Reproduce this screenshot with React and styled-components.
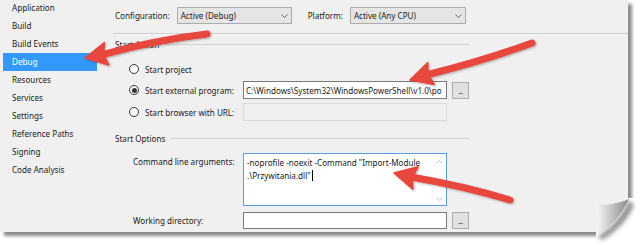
import React from 'react';
import styled, { createGlobalStyle } from 'styled-components';

const Global = createGlobalStyle`
  html, body {
    margin: 0;
    padding: 0;
    background: #ffffff;
  }
  body {
    font-family: "Noto Sans", "DejaVu Sans", sans-serif;
    font-size: 8.1px;
    color: #1b1b1b;
  }
`;

const pages = [
  'Application',
  'Build',
  'Build Events',
  'Debug',
  'Resources',
  'Services',
  'Settings',
  'Reference Paths',
  'Signing',
  'Code Analysis',
];

const arrows = [
  { tail: [207, 34], tip: [85, 58], bend: 4 },
  { tail: [532, 43], tip: [410, 80], bend: -3 },
  { tail: [510, 200], tip: [394, 173], bend: 3 },
];

function Arrow({ tail, tip, bend }) {
  const dx = tip[0] - tail[0];
  const dy = tip[1] - tail[1];
  const len = Math.hypot(dx, dy);
  const ux = dx / len;
  const uy = dy / len;
  const nx = -uy;
  const ny = ux;
  const headLen = 22;
  const headW = 11.5;
  const bx = tip[0] - ux * headLen;
  const by = tip[1] - uy * headLen;
  const mx = (tail[0] + bx) / 2 + nx * bend;
  const my = (tail[1] + by) / 2 + ny * bend;
  const ex = bx + ux * 3;
  const ey = by + uy * 3;
  return (
    <g>
      <path
        d={`M${tail[0]} ${tail[1]} Q${mx} ${my} ${ex} ${ey}`}
        stroke="#e8463d"
        strokeWidth="7"
        strokeLinecap="round"
        fill="none"
      />
      <polygon
        points={`${tip[0]},${tip[1]} ${bx + nx * headW},${by + ny * headW} ${bx + ux * 3},${by + uy * 3} ${bx - nx * headW},${by - ny * headW}`}
        fill="#e8463d"
        strokeLinejoin="round"
        stroke="#e8463d"
        strokeWidth="1.5"
      />
    </g>
  );
}

function Chevron({ up }) {
  return (
    <svg width="7" height="4" viewBox="0 0 7 4">
      <polyline
        points={up ? '0.5,3.5 3.5,0.5 6.5,3.5' : '0.5,0.5 3.5,3.5 6.5,0.5'}
        fill="none"
        stroke="currentColor"
        strokeWidth="1"
      />
    </svg>
  );
}

export default function App() {
  return (
    <Stage>
      <Global />
      <Sheet>
        <Sidebar>
          {pages.map((p) => (
            <NavItem key={p} $active={p === 'Debug'}>
              {p}
            </NavItem>
          ))}
        </Sidebar>
        <Main>
          <ConfigBar>
            <BarLabel>Configuration:</BarLabel>
            <Dropdown $w={115}>
              Active (Debug)
              <Chevron />
            </Dropdown>
            <BarLabel $gap={16}>Platform:</BarLabel>
            <Dropdown $w={116}>
              Active (Any CPU)
              <Chevron />
            </Dropdown>
          </ConfigBar>
          <Divider />

          <GroupHeader>
            <span>Start Action</span>
            <Rule />
          </GroupHeader>
          <RadioRows>
            <RadioRow>
              <Radio>
                <Dot />
                Start project
              </Radio>
            </RadioRow>
            <RadioRow>
              <Radio>
                <Dot $checked />
                Start external program:
              </Radio>
              <Field>C:\Windows\System32\WindowsPowerShell\v1.0\po</Field>
              <Browse>...</Browse>
            </RadioRow>
            <RadioRow $shift={1}>
              <Radio>
                <Dot />
                Start browser with URL:
              </Radio>
              <Field $disabled />
            </RadioRow>
          </RadioRows>

          <GroupHeader $top={8}>
            <span>Start Options</span>
            <Rule />
          </GroupHeader>
          <OptionRow $top={6}>
            <OptionLabel>Command line arguments:</OptionLabel>
            <TextArea>
              <span>
                -noprofile -noexit -Command "Import-Module
                <br />
                .\Przywitania.dll"
                <Caret />
              </span>
              <ScrollCol>
                <Chevron up />
                <Chevron />
              </ScrollCol>
            </TextArea>
          </OptionRow>
          <OptionRow $top={6}>
            <OptionLabel>Working directory:</OptionLabel>
            <Field $h={17} />
            <Browse $h={17}>...</Browse>
          </OptionRow>
        </Main>
      </Sheet>

      <Curl width="44" height="47" viewBox="596 198 44 47">
        <defs>
          <linearGradient id="curlFill" x1="0" y1="0" x2="1" y2="0">
            <stop offset="0" stopColor="#f4f4f4" />
            <stop offset="0.5" stopColor="#c0c0c0" />
            <stop offset="1" stopColor="#888888" />
          </linearGradient>
          <filter id="curlShadow" x="-50%" y="-50%" width="200%" height="200%">
            <feGaussianBlur stdDeviation="2" />
          </filter>
        </defs>
        <rect x="596" y="198" width="44" height="47" fill="#ffffff" />
        <path d="M629 200 C622 215 612 228 598 236 L602 240 C616 232 628 220 634 205 Z" fill="#4a4a4a" opacity="0.6" filter="url(#curlShadow)" />
        <path d="M596 198 L629 198 L629 199 C620 203 606 205 597 205 L596 205 Z" fill="#f0f0f0" />
        <path d="M596 205 L597 205 C600 214 600 224 598 233 L596 233 Z" fill="#f0f0f0" />
        <path d="M629 199 C620 203 606 205 597 205 C600 214 600 224 598 235 C611 227 622 214 629 199 Z" fill="url(#curlFill)" />
      </Curl>

      <Overlay width="640" height="245" viewBox="0 0 640 245">
        <defs>
          <filter id="arrowShadow" x="-10%" y="-30%" width="120%" height="160%">
            <feDropShadow dx="1" dy="1" stdDeviation="0.8" floodColor="#000" floodOpacity="0.3" />
          </filter>
        </defs>
        <g filter="url(#arrowShadow)">
          {arrows.map((a, i) => (
            <Arrow key={i} {...a} />
          ))}
        </g>
      </Overlay>
    </Stage>
  );
}

const Stage = styled.div`
  position: relative;
  width: 640px;
  height: 245px;
  overflow: hidden;
  background: #ffffff;
`;

const Sheet = styled.div`
  width: 628px;
  height: 232px;
  background: #f0f0f0;
  box-shadow: 4px 4px 3px rgba(0, 0, 0, 0.45);
  display: grid;
  grid-template-columns: 113px 515px;
  overflow: hidden;
`;

const Sidebar = styled.div`
  display: flex;
  flex-direction: column;
  margin-top: -1px;
`;

const NavItem = styled.div`
  height: 18px;
  line-height: 18px;
  width: 94px;
  margin-left: 3px;
  padding-left: 9px;
  box-sizing: border-box;
  white-space: nowrap;
  color: ${(p) => (p.$active ? '#ffffff' : '#1b1b1b')};
  background: ${(p) => (p.$active ? '#3399ff' : 'transparent')};
`;

const Main = styled.div`
  display: flex;
  flex-direction: column;
  min-width: 0;
`;

const ConfigBar = styled.div`
  display: flex;
  align-items: center;
  height: 17px;
  padding: 7px 0 9px 2px;
`;

const BarLabel = styled.span`
  margin-left: ${(p) => p.$gap || 0}px;
  margin-right: 7px;
  white-space: nowrap;
`;

const Dropdown = styled.div`
  width: ${(p) => p.$w}px;
  height: 17px;
  box-sizing: border-box;
  border: 1px solid #acacac;
  background: #e5e5e5;
  display: flex;
  align-items: center;
  justify-content: space-between;
  padding: 0 3px 0 3px;
  color: #1b1b1b;
  white-space: nowrap;

  svg {
    color: #6a6a6a;
  }
`;

const Divider = styled.div`
  height: 2px;
  background: #cdcdcd;
  border-bottom: 1px solid #f7f7f7;
  box-sizing: border-box;
`;

const GroupHeader = styled.div`
  display: flex;
  align-items: center;
  gap: 6px;
  height: 18px;
  width: 356px;
  padding-left: 2px;
  margin-top: ${(p) => p.$top || 0}px;
  box-sizing: border-box;
  white-space: nowrap;
`;

const Rule = styled.div`
  flex: 1;
  height: 1px;
  background: #d0d0d0;
`;

const RadioRows = styled.div`
  display: flex;
  flex-direction: column;
  gap: 3px;
  margin-top: 7px;
  padding-left: 15px;
`;

const RadioRow = styled.div`
  display: grid;
  grid-template-columns: 110px 204px 17px;
  column-gap: 5px;
  align-items: center;
  height: 18px;
  margin-top: ${(p) => p.$shift || 0}px;
`;

const Radio = styled.div`
  display: flex;
  align-items: center;
  gap: 6px;
  padding-left: 1px;
  white-space: nowrap;
  min-width: 0;
`;

const Dot = styled.span`
  flex: none;
  width: 10px;
  height: 10px;
  box-sizing: border-box;
  border: 1px solid #333333;
  border-radius: 50%;
  background: #ffffff;
  display: flex;
  align-items: center;
  justify-content: center;

  &::after {
    content: '';
    width: 5px;
    height: 5px;
    border-radius: 50%;
    background: ${(p) => (p.$checked ? '#333333' : 'transparent')};
  }
`;

const Field = styled.div`
  height: ${(p) => p.$h || 18}px;
  box-sizing: border-box;
  border: 1px solid ${(p) => (p.$disabled ? '#d9d9d9' : '#7a7a7a')};
  background: ${(p) => (p.$disabled ? '#f0f0f0' : '#ffffff')};
  padding: 0 2px;
  display: flex;
  align-items: center;
  overflow: hidden;
  white-space: nowrap;
  min-width: 0;
`;

const Browse = styled.div`
  height: ${(p) => p.$h || 17}px;
  box-sizing: border-box;
  border: 1px solid #adadad;
  background: #e1e1e1;
  display: flex;
  align-items: flex-end;
  justify-content: center;
  padding-bottom: 3px;
  font-size: 7px;
  line-height: 1;
  letter-spacing: -0.5px;
`;

const OptionRow = styled.div`
  display: grid;
  grid-template-columns: 105px 204px 17px;
  column-gap: 5px;
  align-items: start;
  padding-left: 20px;
  margin-top: ${(p) => p.$top || 0}px;
`;

const OptionLabel = styled.div`
  white-space: nowrap;
  line-height: 13px;
  padding-top: 2px;
  min-width: 0;
`;

const TextArea = styled.div`
  height: 53px;
  box-sizing: border-box;
  border: 1px solid #569de5;
  background: #ffffff;
  display: flex;
  justify-content: space-between;
  padding: 2px 0 0 3px;
  line-height: 13px;
  min-width: 0;
`;

const Caret = styled.span`
  display: inline-block;
  width: 1px;
  height: 11px;
  background: #000000;
  vertical-align: -2px;
  margin-left: 1px;
`;

const ScrollCol = styled.div`
  width: 13px;
  display: flex;
  flex-direction: column;
  align-items: center;
  justify-content: space-between;
  padding: 4px 0 4px;
  color: #c2c2c2;
`;

const Curl = styled.svg`
  position: absolute;
  left: 596px;
  top: 198px;
`;

const Overlay = styled.svg`
  position: absolute;
  left: 0;
  top: 0;
  pointer-events: none;
`;
